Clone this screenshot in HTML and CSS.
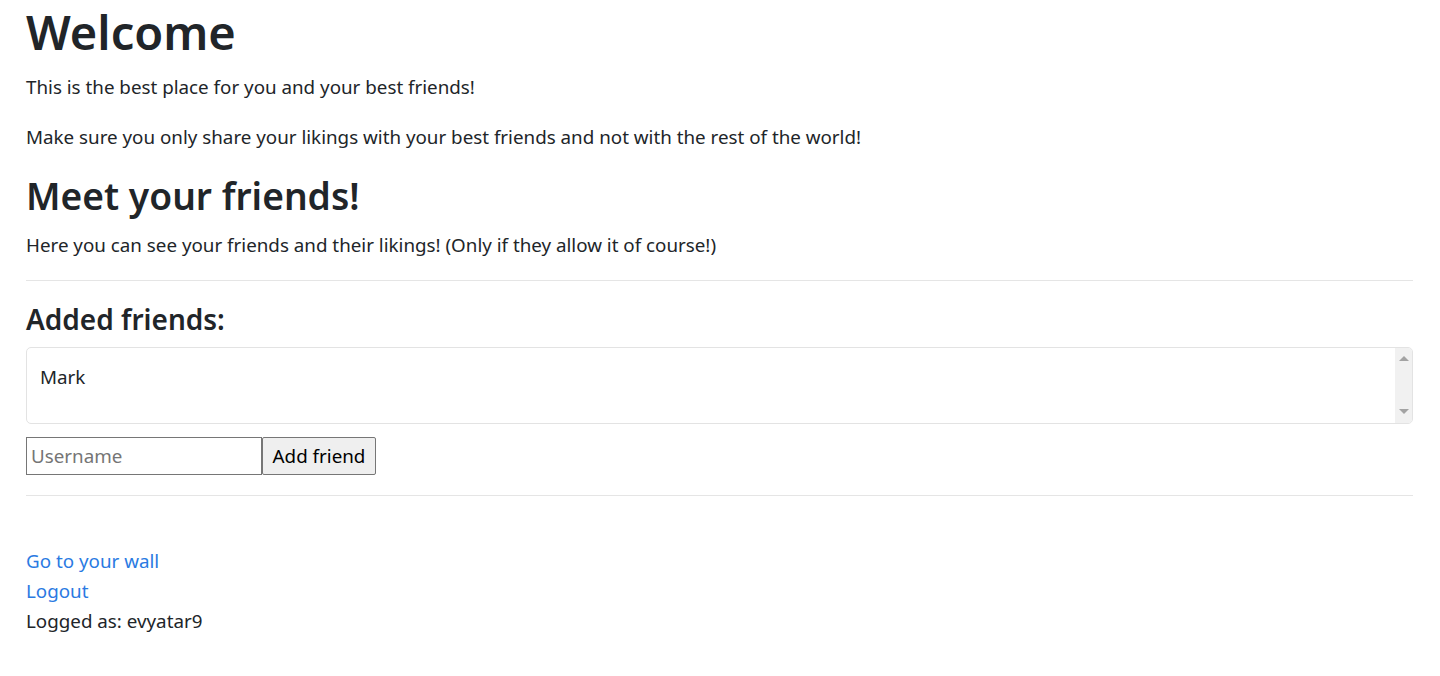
FILE: index.html
```html
<!DOCTYPE html>
<html lang="en">
<head>
<meta charset="utf-8">
<title>Welcome</title>
<link rel="stylesheet" href="styles.css">
</head>
<body>
<div class="page">
  <h1 class="title">Welcome</h1>
  <p>This is the best place for you and your best friends!</p>
  <p>Make sure you only share your likings with your best friends and not with the rest of the world!</p>
  <h2 class="subtitle">Meet your friends!</h2>
  <p>Here you can see your friends and their likings! (Only if they allow it of course!)</p>
  <hr class="rule">
  <h4 class="section">Added friends:</h4>
  <div class="list-box">
    <div class="list-items">
      <div class="list-item">Mark</div>
    </div>
    <div class="scrollbar">
      <span class="arrow up"></span>
      <span class="arrow down"></span>
    </div>
  </div>
  <form class="add-form">
    <input class="username" type="text" placeholder="Username"><button class="add-btn" type="button">Add friend</button>
  </form>
  <hr class="rule">
  <br>
  <a class="nav-link" href="#">Go to your wall</a>
  <a class="nav-link" href="#">Logout</a>
  <div class="logged">Logged as: evyatar9</div>
</div>
</body>
</html>
```
FILE: styles.css
```css
html, body {
  margin: 0;
  padding: 0;
  background: #fff;
}
body {
  font-family: "Noto Sans", "Open Sans", sans-serif;
  font-size: 18.8px;
  line-height: 30px;
  color: #212529;
}
.page {
  padding: 2px 27px 0 26px;
}
p {
  margin: 0 0 20px 0;
}
.title {
  font-size: 47px;
  line-height: 60px;
  font-weight: 600;
  margin: 0 0 10px 0;
}
.subtitle {
  font-size: 37.2px;
  line-height: 48px;
  font-weight: 600;
  margin: 0 0 10px 0;
}
.section {
  font-size: 28px;
  line-height: 36px;
  font-weight: 600;
  margin: 0 0 10px 0;
}
.rule {
  border: 0;
  border-top: 1px solid rgba(0, 0, 0, 0.1);
  margin: 20px 0;
  height: 0;
}
.list-box {
  display: flex;
  height: 77px;
  box-sizing: border-box;
  border: 1px solid #e3e3e3;
  border-radius: 5px;
  overflow: hidden;
  margin-bottom: 13px;
}
.list-items {
  flex: 1;
  padding: 14px 13px;
}
.list-item {
  line-height: 30px;
}
.scrollbar {
  width: 17px;
  background: #f1f1f1;
  display: flex;
  flex-direction: column;
  justify-content: space-between;
  align-items: center;
  padding: 8px 0 9px;
}
.arrow {
  width: 0;
  height: 0;
  border-left: 5px solid transparent;
  border-right: 5px solid transparent;
}
.arrow.up {
  border-bottom: 5px solid #a3a3a3;
}
.arrow.down {
  border-top: 5px solid #a3a3a3;
}
.add-form {
  display: flex;
  margin: 0;
}
.username {
  font-family: inherit;
  font-size: 18.8px;
  width: 236px;
  height: 38px;
  box-sizing: border-box;
  border: 1px solid #767676;
  padding: 1px 4px;
  margin: 0;
  color: #212529;
}
.username::placeholder {
  color: #757575;
}
.add-btn {
  font-family: inherit;
  font-size: 18.8px;
  height: 38px;
  width: 114px;
  box-sizing: border-box;
  background: #efefef;
  border: 1px solid #767676;
  border-radius: 2px;
  padding: 0;
  margin: 0;
  color: #000;
}
.nav-link {
  display: block;
  color: #2a7ae2;
  text-decoration: none;
}
.logged {
  line-height: 30px;
}
```
